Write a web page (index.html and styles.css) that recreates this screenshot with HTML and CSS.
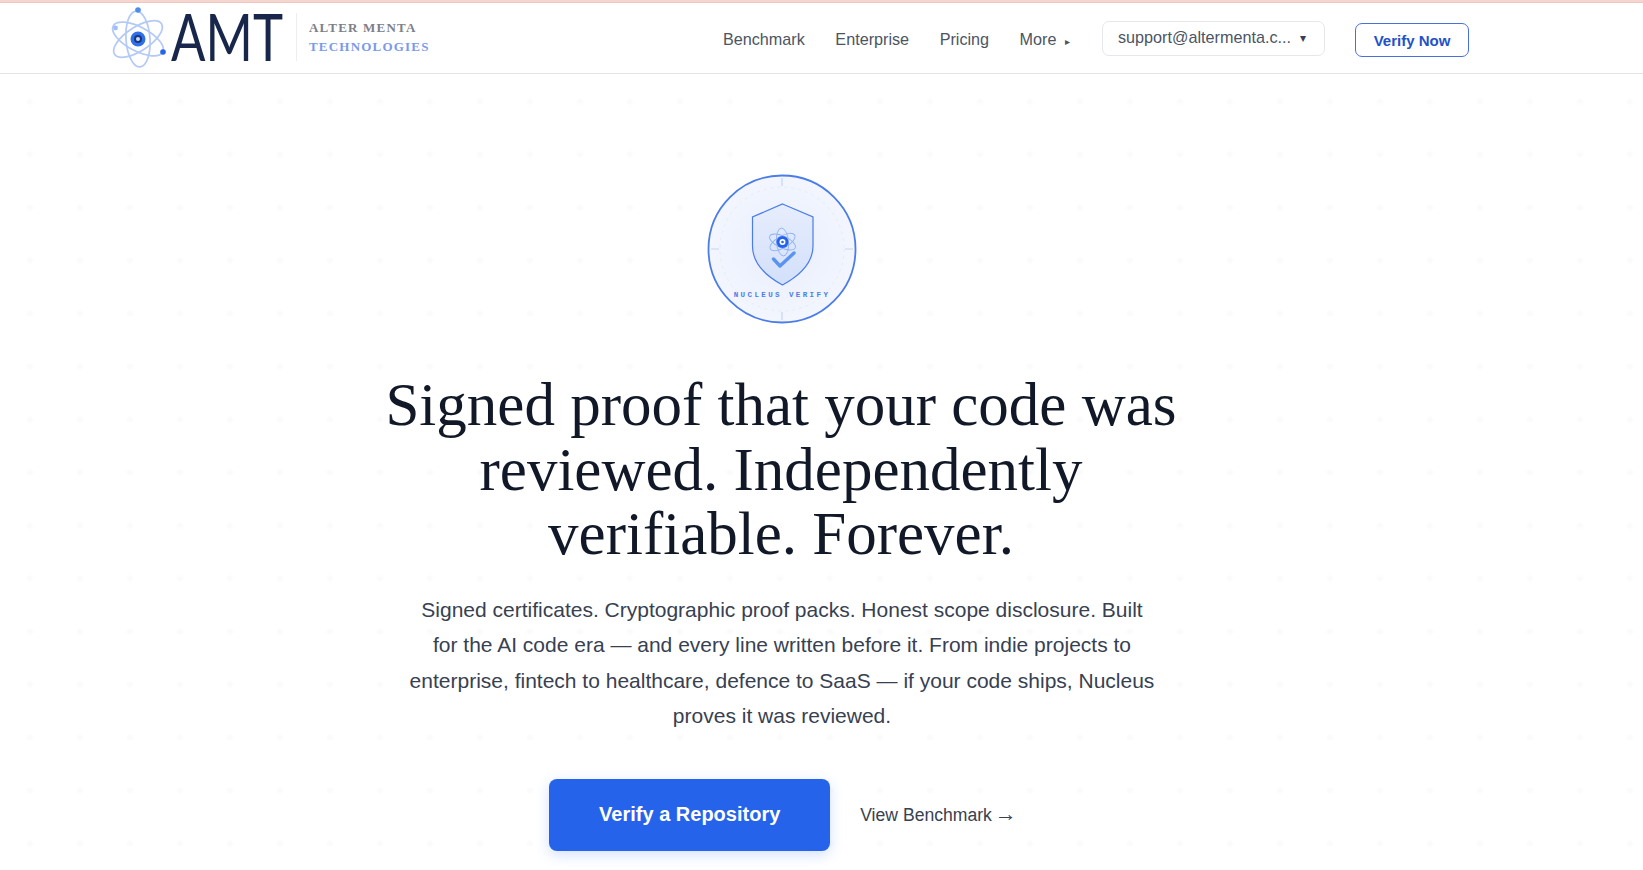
FILE: index.html
```html
<!DOCTYPE html>
<html lang="en">
<head>
<meta charset="utf-8">
<title>Nucleus Verify</title>
<link rel="stylesheet" href="styles.css">
</head>
<body>
<div class="topline"></div>
<header class="nav">
  <div class="brand">
    <svg class="brand-atom" viewBox="0 0 60 64" width="60" height="64" aria-hidden="true">
      <g fill="none" stroke="#b3c9f6" stroke-width="1.700">
        <ellipse cx="28" cy="34" rx="12" ry="28" transform="rotate(-4 28 34)"/>
        <ellipse cx="28" cy="34" rx="12" ry="28" transform="rotate(57 28 34)"/>
        <ellipse cx="28" cy="34" rx="12" ry="28" transform="rotate(-62 28 34)"/>
      </g>
      <circle cx="28" cy="34" r="7.500" fill="#2f6fe8"/>
      <circle cx="28" cy="34" r="4" fill="#17387e"/>
      <circle cx="28" cy="34" r="2" fill="#c7d9fb"/>
      <circle cx="28" cy="5" r="2.800" fill="#4a8cf0"/>
      <circle cx="53" cy="47" r="2.800" fill="#2563eb"/>
      <circle cx="5.500" cy="23" r="2.400" fill="#9cc0f7"/>
    </svg>
    <svg class="brand-word" viewBox="0 0 114 64" width="114" height="64" role="img" aria-label="AMT">
      <text class="brand-mark" x="1" y="56" textLength="112" lengthAdjust="spacingAndGlyphs">AMT</text>
    </svg>
    <div class="brand-sub">
      <span class="brand-line1">ALTER MENTA</span>
      <span class="brand-line2">TECHNOLOGIES</span>
    </div>
  </div>
  <div class="nav-right">
    <nav class="links">
      <a>Benchmark</a>
      <a>Enterprise</a>
      <a>Pricing</a>
      <a class="more">More <span class="caret-small">▸</span></a>
    </nav>
    <div class="account"><span>support@altermenta.c...</span><span class="caret">▾</span></div>
    <a class="verify-now">Verify Now</a>
  </div>
</header>
<main class="hero">
  <svg class="badge" viewBox="0 0 150 150" width="150" height="150" aria-hidden="true">
    <defs>
      <radialGradient id="disc" cx="50%" cy="50%" r="50%">
        <stop offset="0" stop-color="#e8eefd"/>
        <stop offset="1" stop-color="#f3f6fe"/>
      </radialGradient>
      <linearGradient id="shield" x1="0" y1="0" x2="0" y2="1">
        <stop offset="0" stop-color="#e6edfd"/>
        <stop offset="1" stop-color="#d3e0fa"/>
      </linearGradient>
    </defs>
    <circle cx="75" cy="75" r="73.500" fill="url(#disc)" stroke="#4a7dea" stroke-width="1.800"/>
    <circle cx="75" cy="75" r="62" fill="none" stroke="#e6ecfc" stroke-width="1" stroke-dasharray="3 4"/>
    <path d="M75 4v8M75 138v8M4 75h8M138 75h8" stroke="#c5d4f6" stroke-width="1.200"/>
    <path d="M75.500 30 L106 43 V72 C106 90 92 102 75.500 111 C59 102 45.500 90 45.500 72 V43 Z" fill="url(#shield)" stroke="#4a7dea" stroke-width="1.200"/>
    <g fill="none" stroke="#8fb0f2" stroke-width=".9">
      <ellipse cx="75.500" cy="68" rx="6" ry="14" transform="rotate(-5 75.500 68)"/>
      <ellipse cx="75.500" cy="68" rx="6" ry="14" transform="rotate(60 75.500 68)"/>
      <ellipse cx="75.500" cy="68" rx="6" ry="14" transform="rotate(-65 75.500 68)"/>
    </g>
    <circle cx="75.500" cy="68" r="6" fill="#2563eb"/>
    <circle cx="75.500" cy="68" r="3" fill="#fff"/>
    <circle cx="75.500" cy="68" r="1.300" fill="#2563eb"/>
    <path d="M66.500 85 L73 92 L87 79" fill="none" stroke="#5a94f2" stroke-width="3.400" stroke-linecap="round" stroke-linejoin="round"/>
    <text class="badge-text" x="75" y="123" text-anchor="middle">NUCLEUS VERIFY</text>
  </svg>
  <h1>Signed proof that your code was reviewed. Independently verifiable. Forever.</h1>
  <p class="lede">Signed certificates. Cryptographic proof packs. Honest scope disclosure. Built for the AI code era — and every line written before it. From indie projects to enterprise, fintech to healthcare, defence to SaaS — if your code ships, Nucleus proves it was reviewed.</p>
  <div class="actions">
    <a class="primary">Verify a Repository</a>
    <a class="secondary">View Benchmark <span class="arrow">→</span></a>
  </div>
</main>
</body>
</html>
```
FILE: styles.css
```css
* { box-sizing: border-box; }
html, body { margin: 0; height: 870px; overflow: hidden; }
body {
  background-color: #fff;
  background-image: radial-gradient(circle, #fbfbfc 0, #fbfbfc 2px, transparent 4px);
  background-size: 50px 53px;
  background-position: 5px 75px;
  font-family: "Liberation Sans", Arial, sans-serif;
  color: #374151;
}
.topline { height: 3px; background: #f6d6cf; border-bottom: 1px solid #eec7c0; }
.nav {
  height: 71px;
  display: flex;
  align-items: center;
  padding: 0 174px 0 110px;
  background: #fff;
  border-bottom: 1px solid #e3e5e8;
}
.brand { display: flex; align-items: center; margin-right: auto; }
.brand-atom { display: block; margin-top: -2px; }
.brand-word { display: block; margin-top: -2px; overflow: visible; }
.brand-mark {
  font-family: Lato, "Liberation Sans", sans-serif;
  font-weight: 400;
  font-size: 65px;
  fill: #17264a;
}
.brand-sub {
  display: flex;
  flex-direction: column;
  gap: 4px;
  margin-left: 12px;
  padding-left: 12px;
  border-left: 1px solid #eceef1;
  font-family: "Liberation Serif", serif;
  font-weight: 700;
  font-size: 13px;
  line-height: 15px;
  letter-spacing: 1.200px;
  height: 48px;
  justify-content: center;
  margin-bottom: 2px;
}
.brand-line1 { color: #7d8088; }
.brand-line2 { color: #7a9ae8; }
.nav-right { display: flex; align-items: center; padding-top: 4px; }
.links { display: flex; gap: 30.500px; font-size: 16.200px; color: #4b5563; margin: -2px 32px 0 0; }
.caret-small { font-size: 10px; margin-left: 4px; }
.account {
  width: 223px;
  height: 35px;
  border: 1px solid #e5e7eb;
  border-radius: 7px;
  display: flex;
  align-items: center;
  justify-content: space-between;
  padding: 0 18px 1px 15px;
  font-size: 16.200px;
  color: #4b5563;
  margin-top: -4px;
  margin-right: 30px;
}
.caret { font-size: 12px; color: #374151; }
.verify-now {
  width: 114px;
  height: 34px;
  border: 1px solid #4a6fe0;
  border-radius: 7px;
  display: flex;
  align-items: center;
  justify-content: center;
  font-size: 15px;
  font-weight: 700;
  color: #2450c8;
}
.hero { display: flex; flex-direction: column; align-items: center; padding: 100px 79px 0 0; }
.badge { display: block; }
.badge-text {
  font-family: "Liberation Mono", monospace;
  font-size: 7.500px;
  font-weight: 700;
  letter-spacing: 2.400px;
  fill: #4a7dea;
}
h1 {
  width: 800px;
  margin: 49px 2px 0 0;
  text-align: center;
  font-family: "Liberation Serif", serif;
  font-weight: 400;
  font-size: 61px;
  line-height: 64.500px;
  color: #111827;
}
.lede {
  width: 748px;
  margin: 25px 0 0;
  text-align: center;
  font-size: 21px;
  line-height: 35.600px;
  color: #374151;
}
.actions { display: flex; align-items: center; gap: 30px; margin: 45px 0 0 2px; }
.primary {
  width: 281px;
  height: 72px;
  display: flex;
  align-items: center;
  justify-content: center;
  border-radius: 8px;
  background: #2563eb;
  color: #fff;
  font-size: 20px;
  font-weight: 700;
  box-shadow: 0 4px 14px rgba(37, 99, 235, .2);
}
.secondary { font-size: 17.600px; color: #374151; }
.arrow { font-family: "Liberation Serif", serif; font-size: 22px; line-height: 1; margin-left: -2px; }
```
